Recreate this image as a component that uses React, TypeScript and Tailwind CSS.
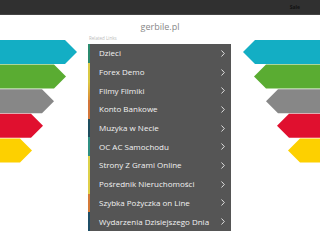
const LINKS = [
  { label: "Dzieci", strip: "bg-[#2b8a6e]" },
  { label: "Forex Demo", strip: "bg-[#d9c943]" },
  { label: "Filmy Filmiki", strip: "bg-gradient-to-b from-[#dccb45] to-[#d98a36]" },
  { label: "Konto Bankowe", strip: "bg-[#d2763a]" },
  { label: "Muzyka w Necie", strip: "bg-[#1e4d5e]" },
  { label: "OC AC Samochodu", strip: "bg-[#2f8f82]" },
  { label: "Strony Z Grami Online", strip: "bg-[#dcd24a]" },
  { label: "Pośrednik Nieruchomości", strip: "bg-[#e0cf48]" },
  { label: "Szybka Pożyczka on Line", strip: "bg-[#d47a38]" },
  { label: "Wydarzenia Dzisiejszego Dnia", strip: "bg-[#1f4e66]" },
];

const ARROWS = [
  { color: "#13aec4", tip: 77 },
  { color: "#5aac32", tip: 66 },
  { color: "#878787", tip: 54 },
  { color: "#e0102f", tip: 43 },
  { color: "#fdd000", tip: 32 },
];

function Arrows({ flip }: { flip?: boolean }) {
  return (
    <svg
      width="88"
      height="124"
      viewBox="0 0 88 124"
      className={flip ? "-scale-x-100" : ""}
    >
      {ARROWS.map((a, i) => {
        const y = i * 24.6;
        const w = a.tip;
        return (
          <polygon
            key={a.color}
            fill={a.color}
            points={`0,${y} ${w - 12},${y} ${w},${y + 12} ${w - 12},${y + 24} 0,${y + 24}`}
          />
        );
      })}
    </svg>
  );
}

export default function App() {
  return (
    <div className="flex h-[240px] w-[320px] flex-col overflow-hidden bg-white font-['Open_Sans',sans-serif]">
      <div className="flex h-[15px] shrink-0 items-center justify-end border-b border-[#444] bg-[#303030] pr-[20px]">
        <span className="text-[5px] font-bold leading-none text-[#121212]">Sale</span>
      </div>
      <div className="pt-[6px] text-center text-[9px] leading-[12px] text-[#888]">gerbile.pl</div>
      <div className="flex pt-[5px]">
        <div className="w-[88px] shrink-0 pt-[2px]">
          <Arrows />
        </div>
        <div className="w-[143px] shrink-0">
          <div className="h-[1px] pl-[1px] text-[4.5px] leading-[1px] text-[#bbb]">Related Links</div>
          <div className="mt-[5px] bg-[#555]">
            {LINKS.map((link) => (
              <div key={link.label} className="flex h-[18.7px] items-center">
                <div className={`h-full w-[2px] ${link.strip}`} />
                <span className="ml-[9px] flex-1 text-[8px] leading-none text-[#f2f2f2]">{link.label}</span>
                <svg width="4" height="7" viewBox="0 0 4 7" className="mr-[6px]">
                  <path d="M0.5 0.5 L3.3 3.5 L0.5 6.5" fill="none" stroke="#eee" strokeWidth="0.9" />
                </svg>
              </div>
            ))}
          </div>
        </div>
        <div className="flex w-[89px] shrink-0 justify-end pt-[2px]">
          <Arrows flip />
        </div>
      </div>
    </div>
  );
}
